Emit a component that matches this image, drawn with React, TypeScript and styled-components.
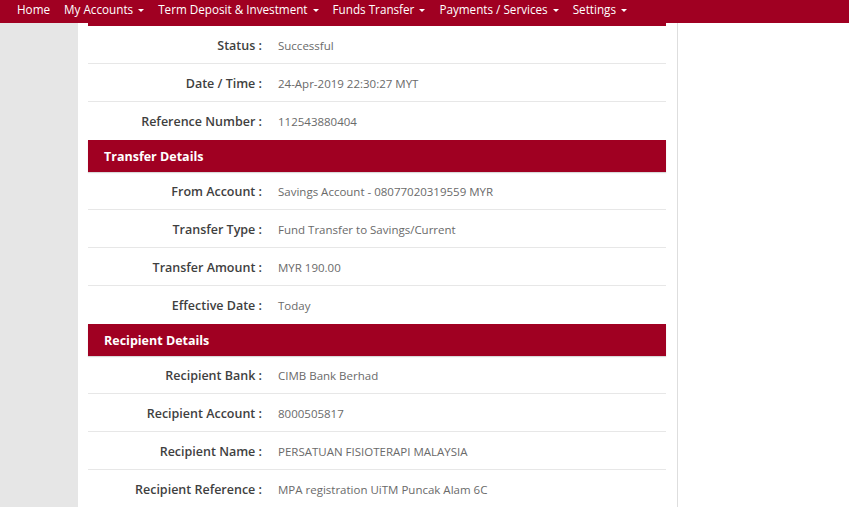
import React from "react";
import styled, { createGlobalStyle } from "styled-components";

const GlobalStyle = createGlobalStyle`
  html, body { margin: 0; padding: 0; background: #ffffff; }
  body { font-family: "Open Sans", "Noto Sans", sans-serif; overflow: hidden; }
`;

const RED = "#a00022";

const Page = styled.div`
  width: 849px;
  height: 507px;
  display: flex;
  flex-direction: column;
  overflow: hidden;
`;

const NavBar = styled.nav`
  height: 23px;
  background: ${RED};
  display: flex;
  align-items: flex-start;
  padding-left: 17px;
  padding-top: 1px;
  box-sizing: border-box;
  gap: 14px;
  flex-shrink: 0;
`;

const NavItem = styled.span`
  color: #ffffff;
  font-size: 11.7px;
  line-height: 17px;
  white-space: nowrap;
  display: flex;
  align-items: center;
  gap: 5px;
`;

const Caret = styled.span`
  width: 0;
  height: 0;
  border-left: 3px solid transparent;
  border-right: 3px solid transparent;
  border-top: 3px solid #ffffff;
  margin-top: 1px;
`;

const Body = styled.div`
  flex: 1;
  display: flex;
`;

const SideGutter = styled.div`
  width: 78px;
  background: #e6e6e6;
  flex-shrink: 0;
`;

const Card = styled.div`
  width: 600px;
  background: #ffffff;
  border-right: 1px solid #dedede;
  padding: 0 11px 0 10px;
  box-sizing: border-box;
  flex-shrink: 0;
`;

const Details = styled.div`
  border-top: 3px solid ${RED};
  display: flex;
  flex-direction: column;
`;

const SectionHeader = styled.div`
  height: 32px;
  background: ${RED};
  color: #ffffff;
  font-weight: 700;
  font-size: 12.5px;
  display: flex;
  align-items: center;
  padding-left: 16px;
  box-shadow: 0 1px 1px rgba(0, 0, 0, 0.15);
`;

const Row = styled.div<{ $last?: boolean }>`
  height: 38px;
  box-sizing: border-box;
  display: grid;
  grid-template-columns: 174px 1fr;
  column-gap: 16px;
  align-items: center;
  padding-top: 1px;
  border-bottom: ${(p) => (p.$last ? "none" : "1.5px solid #e7e7e7")};
`;

const Label = styled.div`
  text-align: right;
  color: #3f3f3f;
  font-size: 12.5px;
  font-weight: 600;
  white-space: nowrap;
`;

const Value = styled.div`
  color: #6a6a6a;
  font-size: 11.5px;
  white-space: nowrap;
`;

const Filler = styled.div`
  flex: 1;
  background: #ffffff;
`;

const BottomLine = styled.div`
  height: 3px;
  background: ${RED};
`;

type Item = { label: string; value: string };

const summary: Item[] = [
  { label: "Status", value: "Successful" },
  { label: "Date / Time", value: "24-Apr-2019 22:30:27 MYT" },
  { label: "Reference Number", value: "112543880404" },
];

const transfer: Item[] = [
  { label: "From Account", value: "Savings Account - 08077020319559 MYR" },
  { label: "Transfer Type", value: "Fund Transfer to Savings/Current" },
  { label: "Transfer Amount", value: "MYR 190.00" },
  { label: "Effective Date", value: "Today" },
];

const recipient: Item[] = [
  { label: "Recipient Bank", value: "CIMB Bank Berhad" },
  { label: "Recipient Account", value: "8000505817" },
  { label: "Recipient Name", value: "PERSATUAN FISIOTERAPI MALAYSIA" },
  { label: "Recipient Reference", value: "MPA registration UiTM Puncak Alam 6C" },
];

const navItems: { label: string; caret: boolean }[] = [
  { label: "Home", caret: false },
  { label: "My Accounts", caret: true },
  { label: "Term Deposit & Investment", caret: true },
  { label: "Funds Transfer", caret: true },
  { label: "Payments / Services", caret: true },
  { label: "Settings", caret: true },
];

const Rows = ({ items }: { items: Item[] }) => (
  <>
    {items.map((it, i) => (
      <Row key={it.label} $last={i === items.length - 1}>
        <Label>{it.label} :</Label>
        <Value>{it.value}</Value>
      </Row>
    ))}
  </>
);

export default function App() {
  return (
    <Page>
      <GlobalStyle />
      <NavBar>
        {navItems.map((n) => (
          <NavItem key={n.label}>
            {n.label}
            {n.caret && <Caret />}
          </NavItem>
        ))}
      </NavBar>
      <Body>
        <SideGutter />
        <Card>
          <Details>
            <Rows items={summary} />
            <SectionHeader>Transfer Details</SectionHeader>
            <Rows items={transfer} />
            <SectionHeader>Recipient Details</SectionHeader>
            <Rows items={recipient} />
            <BottomLine />
          </Details>
        </Card>
        <Filler />
      </Body>
    </Page>
  );
}
